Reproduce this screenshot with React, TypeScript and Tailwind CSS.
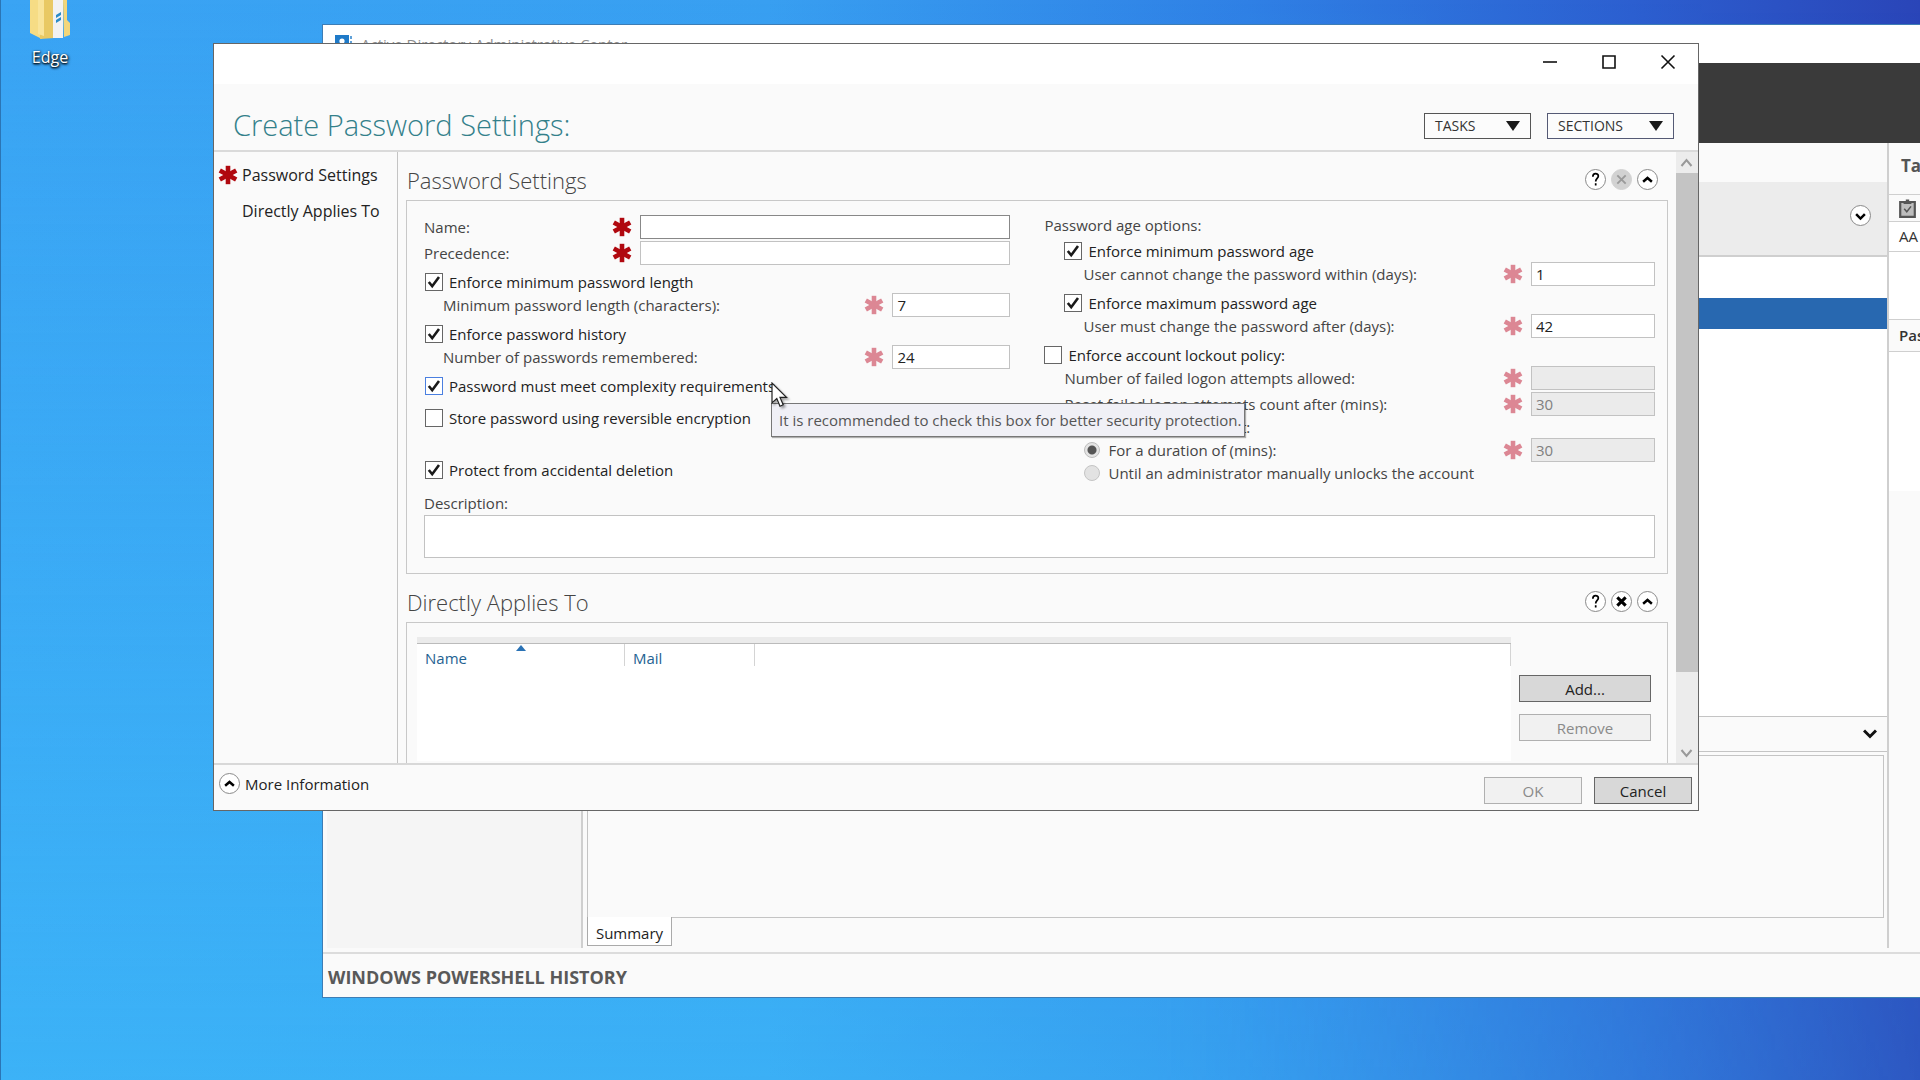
import type { ReactNode } from "react";

const ui = { fontFamily: '"Open Sans", "Noto Sans", sans-serif' };

function Star({ faded = false }: { faded?: boolean }) {
  return (
    <svg
      viewBox="0 0 20 20"
      className={faded ? "size-5 shrink-0 text-[#dc8794]" : "size-5 shrink-0 text-[#b0080f]"}
      aria-hidden="true"
    >
      <g stroke="currentColor" strokeWidth="4.6">
        <path d="M10 .8v18.4" />
        <path d="M1.8 5.4l16.4 9.2" />
        <path d="M18.2 5.4L1.8 14.6" />
      </g>
    </svg>
  );
}

function Check({
  id,
  label,
  checked = false,
  focused = false,
  className = "",
}: {
  id: string;
  label: string;
  checked?: boolean;
  focused?: boolean;
  className?: string;
}) {
  return (
    <div className={`flex h-5 items-center gap-1.5 ${className}`}>
      <span className="grid size-[18px] shrink-0">
        <input
          id={id}
          type="checkbox"
          defaultChecked={checked}
          className={`peer col-start-1 row-start-1 size-[18px] appearance-none border bg-white ${
            focused ? "border-[#4a7fe0]" : "border-[#666]"
          }`}
        />
        <svg
          viewBox="0 0 18 18"
          className="pointer-events-none invisible col-start-1 row-start-1 size-[18px] peer-checked:visible"
          aria-hidden="true"
        >
          <path d="M3.8 9l3.4 4.2L14 4" fill="none" stroke="#1a1a1a" strokeWidth="2.6" />
        </svg>
      </span>
      <label htmlFor={id} className="whitespace-nowrap text-[#222]">
        {label}
      </label>
    </div>
  );
}

function Field({
  id,
  label,
  value = "",
  width = "w-[124px]",
  faded = true,
  disabled = false,
  strong = false,
  className = "",
}: {
  id: string;
  label: string;
  value?: string;
  width?: string;
  faded?: boolean;
  disabled?: boolean;
  strong?: boolean;
  className?: string;
}) {
  return (
    <div className={`flex h-[26px] items-center gap-2 ${className}`}>
      <label htmlFor={id} className="flex-1 whitespace-nowrap text-[#444]">
        {label}
      </label>
      <Star faded={faded} />
      <input
        id={id}
        type="text"
        defaultValue={value}
        disabled={disabled}
        className={`h-6 border px-1 ${width} ${
          strong ? "border-[#888]" : "border-[#c2c2c2]"
        } ${disabled ? "bg-[#ebebeb] text-[#808080]" : "bg-white text-[#222]"}`}
      />
    </div>
  );
}

function Round({
  label,
  children,
  disabled = false,
}: {
  label: string;
  children: ReactNode;
  disabled?: boolean;
}) {
  return (
    <button
      type="button"
      aria-label={label}
      disabled={disabled}
      className={`grid size-[21px] shrink-0 place-items-center rounded-full border ${
        disabled ? "border-[#d2d2d2] bg-[#d2d2d2] text-[#9a9a9a]" : "border-[#8a8a8a] bg-white text-black"
      }`}
    >
      <svg viewBox="0 0 20 20" className="size-[19px]" fill="none" stroke="currentColor" strokeWidth="2.6" aria-hidden="true">
        {children}
      </svg>
    </button>
  );
}

const up = <path d="M5.4 12.4l4.600-4 4.600 4" />;
const down = <path d="M5.4 8.600l4.600 4.600 4.600-4.600" />;

function SectionHead({ title, closable }: { title: string; closable: boolean }) {
  return (
    <header className="flex h-12 items-center justify-between pr-2.5">
      <h2 className="pt-2 pl-px text-[22px] leading-8 font-light text-[#444]">{title}</h2>
      <div className="flex gap-[5px] pt-1.5">
        <Round label={`Help: ${title}`}>
          <path d="M7.2 7c0-4 5.800-4 5.800-.6 0 2.600-2.800 2.400-2.800 5.600M10.2 14v2.400" strokeWidth="1.8" />
        </Round>
        <Round label={`Close: ${title}`} disabled={!closable}>
          <path d="M5.6 5.600l8.800 8.800M14.400 5.600l-8.800 8.800" strokeWidth={closable ? 3.2 : 2} />
        </Round>
        <Round label={`Collapse: ${title}`}>{up}</Round>
      </div>
    </header>
  );
}

function MenuButton({ label, className }: { label: string; className: string }) {
  return (
    <button
      type="button"
      className={`flex h-[26px] items-center justify-between border bg-[#fcfcfc] px-2.5 text-sm text-[#333] ${className}`}
    >
      {label}
      <svg viewBox="0 0 14 10" className="h-[10px] w-[14px]" aria-hidden="true">
        <path d="M0 0h14L7 10z" fill="#1a1a1a" />
      </svg>
    </button>
  );
}

function PushButton({ label, className, disabled = false }: { label: string; className: string; disabled?: boolean }) {
  return (
    <button
      type="button"
      disabled={disabled}
      className={`${className} ${
        disabled
          ? "border border-[#b0b0b0] bg-[#f1f1f1] text-[#8a8a8a]"
          : "border border-[#666] bg-[#d8d8d8] text-[#222]"
      }`}
    >
      {label}
    </button>
  );
}

function AdminCenter() {
  return (
    <section className="absolute top-6 right-0 left-[322px] flex h-[974px] flex-col border border-r-0 border-[#3d7db5] bg-[#fafafa]">
      <div className="flex h-[38px] shrink-0 items-center gap-2 bg-white pl-3">
        <svg viewBox="0 0 18 20" className="h-5 w-[18px]" aria-hidden="true">
          <path d="M0 1h14v18H0z" fill="#1f7ac8" />
          <circle cx="7" cy="7" r="2.6" fill="#fff" />
          <path d="M3 14c0-5 8-5 8 0z" fill="#fff" />
          <path d="M16 2v3M16 7v3M16 12v3" stroke="#1f7ac8" strokeWidth="1.4" />
        </svg>
        <span className="text-[15px] leading-5 text-[#8c8c8c]">Active Directory Administrative Center</span>
      </div>
      <div className="h-20 shrink-0 bg-[#3a3a3a]" />
      <div className="flex flex-1">
        <div className="mb-1 ml-1 w-64 border-r-2 border-[#cfcfcf] bg-[#f5f5f5]" />
        <div className="mb-1 flex flex-1 flex-col border-r-2 border-[#cfcfcf] pl-1">
          <div className="h-[39px]" />
          <div className="flex h-[75px] items-center justify-end border-b-2 border-[#cfcfcf] bg-[#ececec] pr-4 pb-1.5">
            <Round label="Expand filter">{down}</Round>
          </div>
          <div className="h-[459px] bg-white pt-[41px]">
            <div className="h-[31px] bg-[#2868b0]" />
          </div>
          <div className="flex h-9 items-center justify-end border-y border-[#c4c4c4] pr-2.5">
            <button type="button" aria-label="Collapse preview">
              <svg viewBox="0 0 14 10" className="h-2.5 w-3.5" fill="none" stroke="#111" strokeWidth="3" aria-hidden="true">
                <path d="M1 1.5l6 6 6-6" />
              </svg>
            </button>
          </div>
          <div className="mt-[3px] mr-[3px] flex-1 border border-[#c4c4c4] bg-[#fafafa]" />
          <div className="mb-0.5 flex h-7">
            <button type="button" className="-mt-px w-[85px] border border-t-0 border-[#aaa] bg-white pt-1 text-[15px] text-[#222]">
              Summary
            </button>
          </div>
        </div>
        <aside className="flex w-[31px] flex-col overflow-hidden text-[15px] whitespace-nowrap">
          <h2 className="h-[51px] pt-2.5 pl-3 text-[17px] font-bold text-[#555]">Tasks</h2>
          <div className="flex h-7 items-center border-y border-[#cfcfcf] pl-2.5">
            <svg viewBox="0 0 17 19" className="h-[19px] w-[17px] shrink-0" aria-hidden="true">
              <path d="M1.2 3h14.6v14.8H1.2z" fill="#bdbdbd" stroke="#555" strokeWidth="2.2" />
              <path d="M4.6 5V3h2.2V.6h3.4V3h2.2v2z" fill="#555" />
              <path d="M5.2 9.8l2.6 3 4.2-5.4" fill="none" stroke="#555" strokeWidth="1.5" />
            </svg>
          </div>
          <div className="h-[30px] border-b border-[#cfcfcf] bg-white pt-[3px] pl-2.5 text-[#333]">AA</div>
          <div className="h-[68px] border-b border-[#cfcfcf] bg-white" />
          <div className="h-8 border-b border-[#cfcfcf] pt-1 pl-2.5 font-semibold text-[#333]">Password</div>
          <div className="h-[139px] bg-white" />
        </aside>
      </div>
      <footer className="flex h-[45px] shrink-0 items-center border-t-2 border-[#dcdcdc] pt-0.5 pl-[5px] text-lg font-bold text-[#595959]">
        WINDOWS POWERSHELL HISTORY
      </footer>
    </section>
  );
}

function PasswordDialog() {
  return (
    <section
      role="dialog"
      aria-labelledby="dialog-title"
      className="absolute top-[43px] right-[221px] left-[213px] flex h-[768px] flex-col border border-[#666] bg-[#fafafa] text-[15px] leading-5"
    >
      <div className="flex h-10 shrink-0 items-center justify-end gap-[43px] bg-white pr-[22px] pb-1 text-[#111]">
        {[
          { name: "Minimize", d: "M1 8h14" },
          { name: "Maximize", d: "M2 2h12v12H2z" },
          { name: "Close", d: "M1.5 1.5l13 13M14.500 1.500l-13 13" },
        ].map((b) => (
          <button key={b.name} type="button" aria-label={b.name}>
            <svg viewBox="0 0 16 16" className="size-4" fill="none" stroke="currentColor" strokeWidth="1.6" aria-hidden="true">
              <path d={b.d} />
            </svg>
          </button>
        ))}
      </div>

      <header className="flex h-[68px] shrink-0 items-end border-b-2 border-[#dadada] pr-6 pl-[19px]">
        <h1 id="dialog-title" className="flex-1 pb-[5px] text-[29px] leading-10 font-light text-[#33808a]">
          Create Password Settings:
        </h1>
        <div className="flex gap-4 pb-[11px]">
          <MenuButton label="TASKS" className="w-[107px] border-[#555]" />
          <MenuButton label="SECTIONS" className="w-[127px] border-[#555a75]" />
        </div>
      </header>

      <div className="flex min-h-0 flex-1">
        <nav className="w-[184px] shrink-0 border-r border-[#c4c4c4] pt-[11px] pl-1 text-base leading-6 text-[#222]">
          <a href="#settings" className="flex items-center gap-1">
            <Star />
            Password Settings
          </a>
          <a href="#applies" className="mt-3 block pl-6">
            Directly Applies To
          </a>
        </nav>

        <main className="min-w-0 flex-1 overflow-hidden pr-2 pl-2">
          <section id="settings">
            <SectionHead title="Password Settings" closable={false} />
            <form className="border border-[#c8c8c8] pt-3 pr-3 pb-[15px] pl-[17px]">
              <div className="grid grid-cols-[586fr_610fr] gap-x-[34px]">
                <div className="pt-px">
                  <Field id="name" label="Name:" width="w-[370px]" faded={false} strong />
                  <Field id="precedence" label="Precedence:" width="w-[370px]" faded={false} />
                  <Check id="min-length" label="Enforce minimum password length" checked className="mt-1.5 pl-px" />
                  <Field id="min-length-value" label="Minimum password length (characters):" value="7" width="w-[118px]" className="pl-[19px]" />
                  <Check id="history" label="Enforce password history" checked className="mt-1.5 pl-px" />
                  <Field id="history-value" label="Number of passwords remembered:" value="24" width="w-[118px]" className="pl-[19px]" />
                  <Check id="complexity" label="Password must meet complexity requirements" checked focused className="mt-1.5 pl-px" />
                  <Check id="reversible" label="Store password using reversible encryption" className="mt-3 pl-px" />
                  <Check id="protect" label="Protect from accidental deletion" checked className="mt-8 pl-px" />
                </div>
                <div>
                  <p className="h-7 leading-6 text-[#444]">Password age options:</p>
                  <Check id="min-age" label="Enforce minimum password age" checked className="pl-5" />
                  <Field id="min-age-value" label="User cannot change the password within (days):" value="1" className="pl-[39px]" />
                  <Check id="max-age" label="Enforce maximum password age" checked className="mt-1.5 pl-5" />
                  <Field id="max-age-value" label="User must change the password after (days):" value="42" className="pl-[39px]" />
                  <Check id="lockout" label="Enforce account lockout policy:" className="mt-1.5" />
                  <Field id="attempts" label="Number of failed logon attempts allowed:" disabled className="pl-5" />
                  <Field id="reset" label="Reset failed logon attempts count after (mins):" value="30" disabled className="pl-5" />
                  <p className="h-5 pl-5 text-[#444]">Account will be locked out:</p>
                  <div className="flex items-center">
                    <input
                      id="for-duration"
                      name="locked"
                      type="radio"
                      disabled
                      defaultChecked
                      aria-label="For a duration"
                      className="ml-10 size-4 shrink-0 appearance-none rounded-full border border-[#bdbdbd] bg-[#e4e4e4] bg-[radial-gradient(circle,#555_0_4px,transparent_5px)]"
                    />
                    <Field id="duration" label="For a duration of (mins):" value="30" disabled className="flex-1 pl-2" />
                  </div>
                  <div className="flex h-5 items-center gap-2 pl-10">
                    <input
                      id="until-admin"
                      name="locked"
                      type="radio"
                      disabled
                      className="size-4 shrink-0 appearance-none rounded-full border border-[#c4c4c4] bg-[#e2e2e2]"
                    />
                    <label htmlFor="until-admin" className="whitespace-nowrap text-[#444]">
                      Until an administrator manually unlocks the account
                    </label>
                  </div>
                </div>
              </div>
              <label htmlFor="description" className="mt-2.5 mb-0.5 block text-[#444]">
                Description:
              </label>
              <textarea id="description" className="block h-[43px] w-full resize-none border border-[#c2c2c2] bg-white" />
            </form>
          </section>

          <section id="applies">
            <SectionHead title="Directly Applies To" closable />
            <div className="flex h-40 border border-[#c8c8c8] pt-3.5 pr-4 pl-2.5">
              <div className="h-[124px] flex-1 bg-white">
                <div className="h-1.5 bg-[#ebebeb]" />
                <table className="w-full table-fixed border-t border-[#bbb] text-left text-[#1f6292]">
                  <thead>
                    <tr>
                      <th className="w-[208px] p-0 font-normal">
                        <span className="flex h-[22px] border-r border-[#d4d4d4] pl-2">
                          <span className="flex-1 pt-1">Name</span>
                          <svg viewBox="0 0 10 6" className="mt-px mr-[98px] h-1.5 w-2.5" aria-label="Sorted ascending">
                            <path d="M5 0l5 6H0z" fill="#2a72b5" />
                          </svg>
                        </span>
                      </th>
                      <th className="w-[130px] p-0 font-normal">
                        <span className="block h-[22px] border-r border-[#d4d4d4] pt-1 pl-2">Mail</span>
                      </th>
                      <th className="p-0" aria-label="Other">
                        <span className="block h-[22px] border-r border-[#d4d4d4]" />
                      </th>
                    </tr>
                  </thead>
                </table>
              </div>
              <div className="ml-2 flex w-[132px] flex-col gap-3 pt-[38px]">
                <PushButton label="Add..." className="h-[27px]" />
                <PushButton label="Remove" className="h-[27px]" disabled />
              </div>
            </div>
          </section>
        </main>

        <div className="flex w-[22px] shrink-0 flex-col bg-[#ececec]" aria-hidden="true">
          <svg viewBox="0 0 21 21" className="size-[21px]" fill="none" stroke="#999" strokeWidth="2">
            <path d="M5.500 14l5-6 5 6" />
          </svg>
          <div className="flex-1 bg-[#c4c4c4]" />
          <div className="h-[70px]" />
          <svg viewBox="0 0 21 21" className="size-[21px]" fill="none" stroke="#999" strokeWidth="2">
            <path d="M5.500 8l5 6 5-6" />
          </svg>
        </div>
      </div>

      <footer className="flex h-[47px] shrink-0 items-start border-t-2 border-[#d8d8d8] pr-1.5 pl-[5px]">
        <div className="flex flex-1 items-center gap-[5px] pt-2">
          <Round label="More information">{up}</Round>
          <span className="text-[#222]">More Information</span>
        </div>
        <div className="flex gap-3 pt-3">
          <PushButton label="OK" className="h-[27px] w-[98px]" disabled />
          <PushButton label="Cancel" className="h-[27px] w-[98px]" />
        </div>
      </footer>

      <div
        role="tooltip"
        className="absolute top-[359px] left-[557px] border border-[#777] bg-[#f0f0f6] py-1.5 pr-0.5 pl-[7px] whitespace-nowrap text-[#555] shadow-[1px_1px_1px_rgba(0,0,0,0.3)]"
      >
        It is recommended to check this box for better security protection.
      </div>
      <svg viewBox="0 0 17 26" className="absolute top-[338px] left-[557px] h-[26px] w-[17px] drop-shadow-[2px_2px_1px_rgba(0,0,0,0.35)]" aria-hidden="true">
        <path d="M1 1v20l4.800-4.400 3.200 7.600 3.200-1.400-3.200-7.400H15.500z" fill="#fff" stroke="#222" strokeWidth="1.200" />
      </svg>
    </section>
  );
}

export default function App() {
  return (
    <div
      style={ui}
      className="relative h-screen min-h-[1020px] overflow-hidden bg-[linear-gradient(90deg,#3aa4f4_0%,#389ff1_40%,#2f80e5_65%,#2c5fd0_85%,#2a45b8_100%)]"
    >
      <div className="absolute inset-0 bg-[linear-gradient(180deg,transparent_0%,rgba(62,192,250,0.500)_100%)] [mask-image:linear-gradient(90deg,#000_0%,#000_60%,rgba(0,0,0,0.3)_100%)]" />
      <div className="absolute inset-y-0 left-0 w-px bg-[#2b75b5]" />
      <a href="#edge" className="absolute top-0 left-5 flex w-[60px] flex-col items-center text-base leading-6 text-white">
        <svg viewBox="0 0 42 40" className="h-10 w-[42px]" aria-hidden="true">
          <path d="M1 0h12v39L1 33z" fill="#f6dc85" />
          <path d="M13 0h12v38l-14 1V35z" fill="#e9c964" />
          <path d="M24 0h10v38H24z" fill="#f2f2f2" />
          <path d="M27 15l5-3v3l-5 3zM27 20l5-3v3l-5 3z" fill="#2c8cc8" />
          <path d="M34 0h4v20l3 3v12l-6 2z" fill="#f3d67a" />
          <path d="M9 0h6v36l-6-2z" fill="#f9e49a" />
        </svg>
        <span className="pt-[5px] [text-shadow:1px_1px_3px_#000,0_1px_2px_#000]">Edge</span>
      </a>
      <AdminCenter />
      <PasswordDialog />
    </div>
  );
}
